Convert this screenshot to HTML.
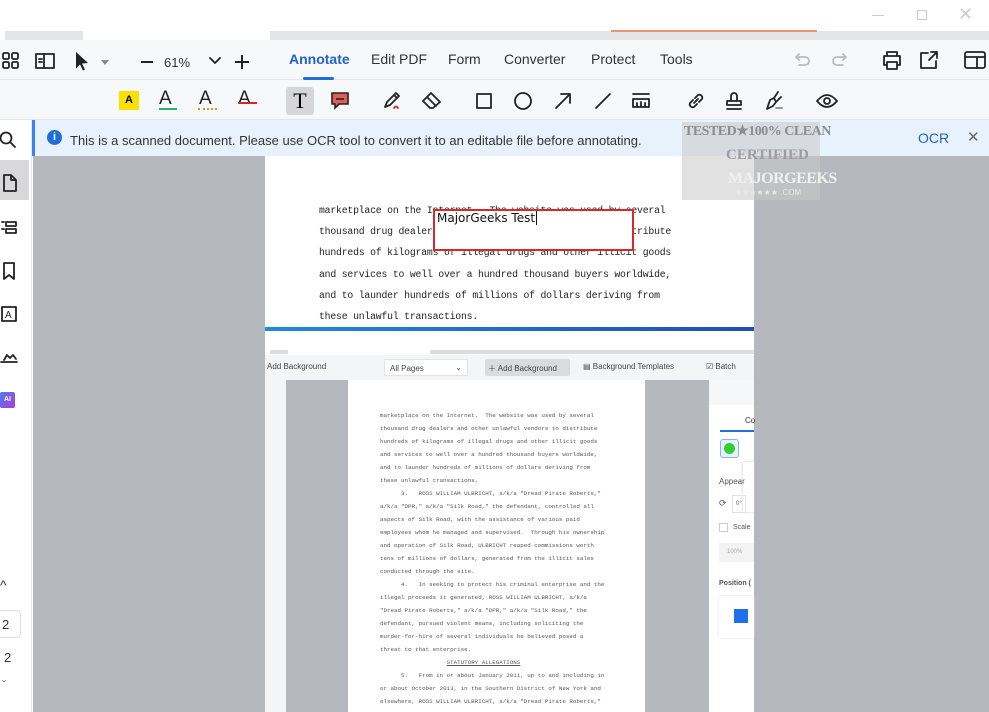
<!DOCTYPE html>
<html style="overflow:hidden"><head><meta charset="utf-8"><style>
*{margin:0;padding:0;box-sizing:border-box}
html,body{width:989px;height:712px;overflow:hidden}
body{background:#fff;font-family:"Liberation Sans",sans-serif;position:relative}
.a{position:absolute}
.tab{position:absolute;top:51px;font-size:14px;color:#333}
svg.i{position:absolute;fill:none;stroke:#222;stroke-width:1.8;stroke-linecap:round;stroke-linejoin:round}
.mono{font-family:"Liberation Mono",monospace;color:#333}
.mono div{white-space:pre}
.big div{height:21.2px;font-size:9.8px;line-height:21.2px;letter-spacing:-0.2px;color:#222}
.small div{height:13px;font-size:5.85px;line-height:13px;color:#555}
</style></head><body>
<!-- title bar -->
<div class="a" style="left:5px;top:31px;width:78px;height:9px;background:#e4e5e7"></div>
<div class="a" style="left:270px;top:31px;width:719px;height:9px;background:#e4e5e7"></div>
<div class="a" style="left:611px;top:30px;width:206px;height:2px;background:#f09070"></div>
<div class="a" style="left:872px;top:15px;width:12px;height:1px;background:#ccc"></div>
<div class="a" style="left:917px;top:10px;width:10px;height:10px;border:1px solid #ccc"></div>
<div class="a" style="left:958px;top:4px;font-size:18px;color:#ccc">✕</div>
<!-- toolbar -->
<div class="a" style="left:0;top:40px;width:989px;height:40px;background:#f7f8fa;border-bottom:1px solid #e6e6e8"></div>
<div class="a" style="left:0;top:80px;width:989px;height:40px;background:#f7f8fa;border-bottom:1px solid #e6e6e8"></div>
<svg class="i" style="left:2px;top:52px" width="18" height="18" viewBox="0 0 18 18"><rect x="1" y="1" width="6" height="6" rx="1.5"/><rect x="10" y="1" width="6" height="6" rx="1.5"/><rect x="1" y="10" width="6" height="6" rx="1.5"/><rect x="10" y="10" width="6" height="6" rx="1.5"/></svg>
<svg class="i" style="left:35px;top:52px" width="20" height="18" viewBox="0 0 20 18"><rect x="1" y="2" width="18" height="14"/><path d="M9 2v14M4 7h3M4 10h3"/></svg>
<svg class="a" style="left:74px;top:51px" width="16" height="20" viewBox="0 0 16 20"><path d="M2 1l12 11-6 .5 3 6-2 1-3-6-4 4z" fill="#222"/></svg>
<div class="a" style="left:101px;top:60px;border:4px solid transparent;border-top:5px solid #888"></div>
<div class="a" style="left:141px;top:61px;width:12px;height:2px;background:#222"></div>
<div class="a" style="left:164px;top:55px;font-size:13px;color:#333">61%</div>
<svg class="i" style="left:209px;top:57px" width="12" height="8" viewBox="0 0 12 8"><path d="M1 1l5 5 5-5"/></svg>
<div class="a" style="left:235px;top:61px;width:14px;height:2px;background:#222"></div>
<div class="a" style="left:241px;top:55px;width:2px;height:14px;background:#222"></div>
<div class="tab" style="left:289px;color:#1f63c7;font-weight:bold">Annotate</div>
<div class="a" style="left:303px;top:77px;width:31px;height:3px;background:#1f6fd8;border-radius:2px"></div>
<div class="tab" style="left:371px">Edit PDF</div>
<div class="tab" style="left:448px">Form</div>
<div class="tab" style="left:504px">Converter</div>
<div class="tab" style="left:591px">Protect</div>
<div class="tab" style="left:660px">Tools</div>
<svg class="i" style="left:794px;top:51px;stroke:#bbb" width="18" height="16" viewBox="0 0 18 16"><path d="M5 3L2 6l3 3M2 6h9a4 4 0 010 8H5"/></svg>
<svg class="i" style="left:830px;top:51px;stroke:#bbb" width="18" height="16" viewBox="0 0 18 16"><path d="M13 3l3 3-3 3M16 6H7a4 4 0 000 8h6"/></svg>
<svg class="i" style="left:881px;top:50px" width="22" height="20" viewBox="0 0 22 20"><path d="M6 6V2h10v4M3 6h16v9h-3M6 15H3V6M6 12h10v7H6z"/></svg>
<svg class="i" style="left:919px;top:50px" width="20" height="20" viewBox="0 0 20 20"><path d="M9 3H2v15h15v-7M12 2h6v6M18 2l-8 8"/></svg>
<svg class="i" style="left:964px;top:51px" width="22" height="18" viewBox="0 0 22 18"><rect x="1" y="1" width="20" height="16" rx="2"/><path d="M1 6h20M13 6v11"/></svg>
<!-- tool row -->
<div class="a" style="left:119px;top:91px;width:20px;height:19px;background:#f9e000;font-size:11px;font-weight:bold;text-align:center;line-height:19px">A</div>
<div class="a" style="left:159px;top:88px;font-size:19px;color:#222">A</div><div class="a" style="left:159px;top:108px;width:18px;height:2px;background:#2bb56a"></div>
<div class="a" style="left:199px;top:88px;font-size:19px;color:#222">A</div><div class="a" style="left:198px;top:108px;width:19px;height:2px;border-bottom:2px dotted #e8901e"></div>
<div class="a" style="left:238px;top:88px;font-size:19px;color:#222">A</div><div class="a" style="left:238px;top:102px;width:19px;height:2px;background:#c92a2a"></div>
<div class="a" style="left:286px;top:87px;width:28px;height:28px;background:#d6d6d8;border-radius:3px;font-family:'Liberation Serif',serif;font-size:22px;text-align:center;line-height:28px">T</div>
<svg class="a" style="left:330px;top:91px" width="20" height="20" viewBox="0 0 20 20"><path d="M2 2h16v11H9l-4 4v-4H2z" fill="#e45b5b" stroke="#222" stroke-width="1.6"/><path d="M6 8h8" stroke="#222" stroke-width="1.6"/></svg>
<svg class="i" style="left:382px;top:90px" width="22" height="22" viewBox="0 0 22 22"><path d="M3 17l2-5 9-9 3 3-9 9zM12 5l3 3"/><path d="M12 18q2-3 4 0" stroke="#d22"/></svg>
<svg class="i" style="left:421px;top:90px" width="22" height="22" viewBox="0 0 22 22"><path d="M2 11l8-8 9 9-7 6-3 0zM6 7l9 9"/></svg>
<svg class="i" style="left:476px;top:93px" width="16" height="16"><rect x="1" y="1" width="14" height="14"/></svg>
<svg class="i" style="left:514px;top:92px" width="18" height="18"><circle cx="9" cy="9" r="8"/></svg>
<svg class="i" style="left:554px;top:92px" width="18" height="18"><path d="M2 16L16 2M7 2h9v9"/></svg>
<svg class="i" style="left:594px;top:92px" width="18" height="18"><path d="M2 16L16 2"/></svg>
<svg class="i" style="left:631px;top:92px" width="20" height="18"><path d="M2 2h16M2 7h16v8H2zM6 11v4M10 10v5M14 11v4"/></svg>
<svg class="i" style="left:686px;top:91px" width="20" height="20"><path d="M8 12l4-4M7 9l-3 3a3 3 0 004 4l3-3M13 11l3-3a3 3 0 00-4-4l-3 3"/></svg>
<svg class="i" style="left:724px;top:90px" width="20" height="22"><path d="M7 11V6a3 3 0 016 0v5M3 11h14v4H3zM3 19h14"/></svg>
<svg class="i" style="left:763px;top:90px" width="22" height="22"><path d="M4 19l3-9 4-2 2 4-3 4zM11 8l4-6M13 12l5-5"/><path d="M13 18h6" stroke="#888"/></svg>
<svg class="i" style="left:816px;top:92px" width="22" height="18"><path d="M1 9q10-12 20 0-10 12-20 0z"/><circle cx="11" cy="9" r="3"/></svg>
<!-- banner -->
<div class="a" style="left:32px;top:120px;width:957px;height:36px;background:#e8f2fd;border-left:3px solid #3b82f6"></div>
<div class="a" style="left:47px;top:130px;width:15px;height:15px;border-radius:50%;background:#1f6fd8;color:#fff;font-size:11px;font-weight:bold;text-align:center;line-height:15px">i</div>
<div class="a" style="left:70px;top:133px;font-size:13px;color:#333">This is a scanned document. Please use OCR tool to convert it to an editable file before annotating.</div>
<div class="a" style="left:918px;top:130px;font-size:14px;color:#1f63c7">OCR</div>
<div class="a" style="left:967px;top:128px;font-size:15px;color:#666">✕</div>
<!-- sidebar -->
<div class="a" style="left:0;top:120px;width:32px;height:592px;background:#fff;border-right:1px solid #e5e5e5"></div>
<svg class="i" style="left:0;top:131px" width="18" height="18"><circle cx="6" cy="7" r="5.5"/><path d="M10 11l5 5"/></svg>
<div class="a" style="left:0;top:160px;width:29px;height:40px;background:#d8d8da"></div>
<svg class="i" style="left:2px;top:173px" width="16" height="20"><path d="M2 2h7l5 5v11H2zM9 2v5h5"/></svg>
<svg class="i" style="left:1px;top:219px" width="16" height="18"><path d="M5 3h10v4H5zM5 10h10v4H5zM1 3h2M1 10h2"/></svg>
<svg class="i" style="left:1px;top:261px" width="16" height="20"><path d="M3 2h10v16l-5-4-5 4z"/></svg>
<svg class="i" style="left:1px;top:305px" width="16" height="18"><rect x="1" y="2" width="14" height="14"/><text x="4" y="13" font-size="10" fill="#222" stroke="none">A</text></svg>
<svg class="i" style="left:0;top:348px" width="18" height="18"><path d="M1 14h16M4 12l3-5 3 3 3-3 3 4"/></svg>
<div class="a" style="left:0;top:392px;width:15px;height:16px;background:linear-gradient(135deg,#4a7cf0,#b03ad8);border-radius:2px;color:#fff;font-size:7px;font-weight:bold;line-height:16px;text-align:center">AI</div>
<div class="a" style="left:0;top:577px;font-size:14px;color:#333">^</div>
<div class="a" style="left:0;top:610px;width:21px;height:28px;border:1px solid #ddd;border-left:none;border-radius:0 4px 4px 0;font-size:13px;line-height:28px;padding-left:2px;color:#333">2</div>
<div class="a" style="left:4px;top:650px;font-size:13px;color:#333">2</div>
<div class="a" style="left:2px;top:678px;font-size:12px;color:#666">ˇ</div>
<!-- gray area -->
<div class="a" style="left:33px;top:156px;width:956px;height:556px;background:#b5b8bc"></div>
<!-- upper page -->
<div class="a" style="left:265px;top:156px;width:489px;height:172px;background:#fff"></div>
<div class="a mono big" style="left:319px;top:200px">
<div>marketplace on the Internet.  The website was used by several</div>
<div>thousand drug dealers and other unlawful vendors to distribute</div>
<div>hundreds of kilograms of illegal drugs and other illicit goods</div>
<div>and services to well over a hundred thousand buyers worldwide,</div>
<div>and to launder hundreds of millions of dollars deriving from</div>
<div>these unlawful transactions.</div>
</div>
<div class="a" style="left:433px;top:209px;width:201px;height:42px;border:2px solid #d8282c;background:#fff"></div>
<div class="a" style="left:437px;top:211px;font-family:'DejaVu Sans',sans-serif;font-size:12px;color:#111">MajorGeeks Test<span style="border-left:1px solid #111;margin-left:1px"></span></div>
<div class="a" style="left:265px;top:327px;width:489px;height:4px;background:linear-gradient(90deg,#1e8ae0,#1e50b0)"></div>
<!-- embedded screenshot -->
<div class="a" style="left:265px;top:331px;width:489px;height:381px;background:#fff"></div>
<div class="a" style="left:270px;top:350px;width:18px;height:4px;background:#ddd"></div>
<div class="a" style="left:430px;top:350px;width:324px;height:4px;background:#ddd"></div>
<div class="a" style="left:265px;top:355px;width:489px;height:25px;background:#f4f5f7"></div>
<div class="a" style="left:267px;top:362px;font-size:8px;color:#444">Add Background</div>
<div class="a" style="left:384px;top:359px;width:84px;height:17px;background:#fff;border:1px solid #e3e3e3;font-size:8px;color:#444;padding:4px 0 0 5px">All Pages<span style="position:absolute;right:5px;top:3px">⌄</span></div>
<div class="a" style="left:485px;top:359px;width:85px;height:17px;background:#dadbdd;border-radius:2px;font-size:8px;color:#444;padding:4px 0 0 3px">＋ Add Background</div>
<div class="a" style="left:583px;top:362px;font-size:8px;color:#444">▤ Background Templates</div>
<div class="a" style="left:706px;top:362px;font-size:8px;color:#444">☑ Batch</div>
<div class="a" style="left:265px;top:380px;width:21px;height:332px;background:#f4f5f7"></div>
<div class="a" style="left:286px;top:380px;width:423px;height:332px;background:#b5b8bc"></div>
<div class="a" style="left:348px;top:380px;width:297px;height:332px;background:#fff"></div>
<div class="a" style="left:709px;top:380px;width:45px;height:332px;background:#fff"></div>
<div class="a" style="left:709px;top:380px;width:45px;height:25px;background:#f6f7f9"></div>
<div class="a" style="left:745px;top:416px;font-size:8px;color:#333">Co</div>
<div class="a" style="left:720px;top:430px;width:34px;height:2px;background:#1f6fd8"></div>
<div class="a" style="left:720px;top:439px;width:19px;height:19px;border:1px solid #8ab4f0;border-radius:3px;background:#e8f0fd"></div>
<div class="a" style="left:724px;top:443px;width:11px;height:11px;border-radius:50%;background:#2fd02f"></div>
<div class="a" style="left:743px;top:462px;width:11px;height:50px;background:#fff;box-shadow:0 0 3px #ccc"></div>
<div class="a" style="left:719px;top:477px;font-size:8px;color:#555">Appear</div>
<div class="a" style="left:719px;top:498px;font-size:9px;color:#555">⟳</div>
<div class="a" style="left:732px;top:495px;width:14px;height:18px;border:1px solid #e3e3e3;font-size:6px;padding:5px 0 0 3px;color:#666">0°</div>
<div class="a" style="left:719px;top:523px;width:9px;height:9px;border:1px solid #ccc"></div>
<div class="a" style="left:733px;top:524px;font-size:7px;color:#555">Scale</div>
<div class="a" style="left:719px;top:543px;width:35px;height:19px;background:#f3f3f3;font-size:6px;color:#aaa;padding:6px 0 0 8px">100%</div>
<div class="a" style="left:719px;top:580px;font-size:7px;font-weight:bold;color:#555">Position (</div>
<div class="a" style="left:719px;top:596px;width:35px;height:42px;background:#fff;box-shadow:0 0 2px #ddd"></div>
<div class="a" style="left:734px;top:609px;width:14px;height:14px;background:#1f6fe8"></div>
<div class="a mono small" style="left:380px;top:409px">
<div>marketplace on the Internet.  The website was used by several</div>
<div>thousand drug dealers and other unlawful vendors to distribute</div>
<div>hundreds of kilograms of illegal drugs and other illicit goods</div>
<div>and services to well over a hundred thousand buyers worldwide,</div>
<div>and to launder hundreds of millions of dollars deriving from</div>
<div>these unlawful transactions.</div>
<div>      3.   ROSS WILLIAM ULBRICHT, a/k/a "Dread Pirate Roberts,"</div>
<div>a/k/a "DPR," a/k/a "Silk Road," the defendant, controlled all</div>
<div>aspects of Silk Road, with the assistance of various paid</div>
<div>employees whom he managed and supervised.  Through his ownership</div>
<div>and operation of Silk Road, ULBRICHT reaped commissions worth</div>
<div>tens of millions of dollars, generated from the illicit sales</div>
<div>conducted through the site.</div>
<div>      4.   In seeking to protect his criminal enterprise and the</div>
<div>illegal proceeds it generated, ROSS WILLIAM ULBRICHT, a/k/a</div>
<div>"Dread Pirate Roberts," a/k/a "DPR," a/k/a "Silk Road," the</div>
<div>defendant, pursued violent means, including soliciting the</div>
<div>murder-for-hire of several individuals he believed posed a</div>
<div>threat to that enterprise.</div>
<div>                   <u>STATUTORY ALLEGATIONS</u></div>
<div>      5.   From in or about January 2011, up to and including in</div>
<div>or about October 2013, in the Southern District of New York and</div>
<div>elsewhere, ROSS WILLIAM ULBRICHT, a/k/a "Dread Pirate Roberts,"</div>
<div>a/k/a "DPR," a/k/a "Silk Road," the defendant, and others known</div>
</div>
<!-- watermark -->
<div class="a" style="left:682px;top:122px;width:138px;height:78px;background:rgba(200,200,200,.55)"></div>
<div class="a" style="left:684px;top:123px;font-family:'Liberation Serif',serif;font-weight:bold;font-size:14px;color:#8a8d92;letter-spacing:-0.5px">TESTED★100% CLEAN</div>
<div class="a" style="left:726px;top:147px;font-family:'Liberation Serif',serif;font-weight:bold;font-size:15px;color:#9a9da2">CERTIFIED</div>
<div class="a" style="left:728px;top:170px;font-family:'Liberation Serif',serif;font-weight:bold;font-size:16px;color:#f0f0f0;letter-spacing:-0.5px">MAJORGEEKS</div>
<div class="a" style="left:735px;top:188px;font-size:8px;color:#e8e8e8">★★★★★★ .COM</div>
</body></html>
